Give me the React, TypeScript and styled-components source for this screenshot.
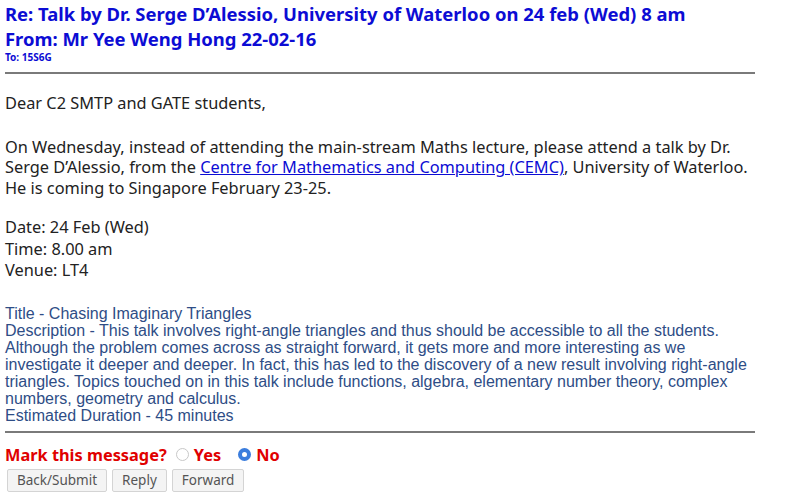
import React from "react";
import styled, { createGlobalStyle } from "styled-components";

const Global = createGlobalStyle`
  html, body { margin: 0; padding: 0; background: #fff; }
  body { font-family: "Noto Sans", "Open Sans", sans-serif; }
`;

const Page = styled.div`
  width: 750px;
  padding: 1px 0 0 5px;
`;

const Heading = styled.div`
  color: #0c0cd4;
  font-weight: 700;
  font-size: 18.45px;
  line-height: 25px;
`;

const ToLine = styled.div`
  color: #0c0cd4;
  font-weight: 700;
  font-size: 10px;
  line-height: 12px;
`;

const Rule = styled.hr<{ $top: number; $bottom: number }>`
  border: 0;
  border-top: 2px solid #7a7a7a;
  margin: ${(p) => p.$top}px 0 ${(p) => p.$bottom}px 0;
`;

const Para = styled.p<{ $gap?: number; $lh?: number }>`
  margin: 0 0 ${(p) => p.$gap ?? 0}px 0;
  font-size: 16.35px;
  line-height: ${(p) => p.$lh ?? 20.5}px;
  color: #222;
`;

const Link = styled.a`
  color: #0c0cd4;
  text-decoration: underline;
`;

const Desc = styled.div`
  font-family: "Liberation Sans", Arial, sans-serif;
  font-size: 16px;
  line-height: 17px;
  color: #2e4d86;
`;

const MarkRow = styled.div`
  display: flex;
  align-items: center;
  color: #e00000;
  font-weight: 700;
  font-size: 16.35px;
  line-height: 20px;
`;

const Label = styled.label<{ $space: number }>`
  display: inline-flex;
  align-items: center;
  gap: 5px;
  margin-left: ${(p) => p.$space}px;
`;

const Radio = styled.span<{ $on?: boolean }>`
  display: inline-block;
  box-sizing: border-box;
  width: 13px;
  height: 13px;
  border-radius: 50%;
  border: ${(p) => (p.$on ? "4px solid #3b7ddd" : "1px solid #c8c8c8")};
  background: #fff;
`;

const Buttons = styled.div`
  display: flex;
  gap: 5px;
  margin-top: 4px;
  padding-left: 2px;
`;

const Btn = styled.button`
  font-family: "Noto Sans", "Open Sans", sans-serif;
  font-size: 13.5px;
  line-height: 19px;
  padding: 1px 9px 1px;
  color: #555;
  background: #f4f4f4;
  border: 1px solid #d4d4d4;
  border-radius: 2px;
`;

export default function App() {
  return (
    <Page>
      <Global />
      <Heading>Re: Talk by Dr. Serge D’Alessio, University of Waterloo on 24 feb (Wed) 8 am</Heading>
      <Heading>From: Mr Yee Weng Hong 22-02-16</Heading>
      <ToLine>To: 15S6G</ToLine>
      <Rule $top={9} $bottom={19} />
      <Para $gap={23}>Dear C2 SMTP and GATE students,</Para>
      <Para $gap={19}>
        On Wednesday, instead of attending the main-stream Maths lecture, please attend a talk by Dr.
        Serge D’Alessio, from the <Link href="#">Centre for Mathematics and Computing (CEMC)</Link>, University of Waterloo.
        He is coming to Singapore February 23-25.
      </Para>
      <Para $gap={23} $lh={21.5}>
        Date: 24 Feb (Wed)
        <br />
        Time: 8.00 am
        <br />
        Venue: LT4
      </Para>
      <Desc>
        Title - Chasing Imaginary Triangles
        <br />
        Description - This talk involves right-angle triangles and thus should be accessible to all the students.
        Although the problem comes across as straight forward, it gets more and more interesting as we
        investigate it deeper and deeper. In fact, this has led to the discovery of a new result involving right-angle
        triangles. Topics touched on in this talk include functions, algebra, elementary number theory, complex
        numbers, geometry and calculus.
        <br />
        Estimated Duration - 45 minutes
      </Desc>
      <Rule $top={7} $bottom={12} />
      <MarkRow>
        Mark this message?
        <Label $space={9}>
          <Radio />
          Yes
        </Label>
        <Label $space={17}>
          <Radio $on />
          No
        </Label>
      </MarkRow>
      <Buttons>
        <Btn>Back/Submit</Btn>
        <Btn>Reply</Btn>
        <Btn>Forward</Btn>
      </Buttons>
    </Page>
  );
}
